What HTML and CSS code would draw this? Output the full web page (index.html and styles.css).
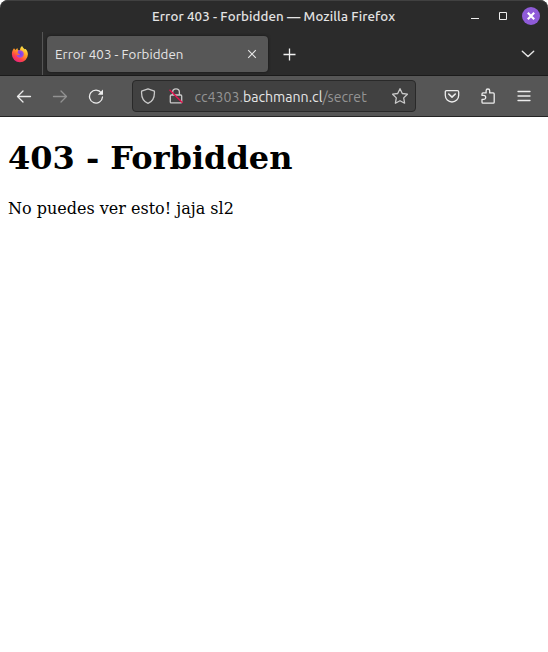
FILE: index.html
```html
<!DOCTYPE html>
<html lang="es">
<head>
<meta charset="utf-8">
<title>Error 403 - Forbidden</title>
<link rel="stylesheet" href="styles.css">
</head>
<body>
<div class="window">
  <header class="chrome">
    <div class="titlebar">
      <span class="window-title">Error 403 - Forbidden — Mozilla Firefox</span>
      <div class="window-controls">
        <svg width="10" height="10"><path d="M1 7.5h8" stroke="#eee"/></svg>
        <svg width="10" height="10"><path d="M1.5 1.5h7v7h-7z" fill="none" stroke="#eee"/></svg>
        <svg width="18" height="18"><circle cx="9" cy="9" r="9" fill="#8f5bd8"/><path d="M5.8 5.8l6.4 6.4m0-6.4l-6.4 6.4" stroke="#fff" stroke-width="2.2"/></svg>
      </div>
    </div>
    <div class="tabs">
      <div class="pinned">
        <svg width="18" height="18" viewBox="0 0 18 18">
          <defs>
            <linearGradient id="flame" x1=".85" y1=".1" x2=".3" y2="1"><stop offset="0" stop-color="#fff14a"/><stop offset=".4" stop-color="#ff9a24"/><stop offset=".72" stop-color="#ff4348"/><stop offset="1" stop-color="#e62082"/></linearGradient>
            <radialGradient id="globe"><stop offset="0" stop-color="#6d45ee"/><stop offset="1" stop-color="#a649df"/></radialGradient>
          </defs>
          <path d="M3 3.2L4.5 5 6.3 3l.7 2.2 2 .2C9 3.3 9.7 2 11.2 1c.4 1.6 1.4 2.3 2.5 3.2l1-.2c1.5 1.7 2.2 3.4 2.2 5.3a8 8 0 0 1-16 0C.9 6.7 1.6 4.7 3 3.2z" fill="url(#flame)"/>
          <path d="M7 5.5c3-.8 5.8.8 5.8 3.6 0 2.4-1.8 3.6-3.8 3.6-2.1 0-3.5-1.3-3.5-2.6l2 .1 1.7-1-2.7-1z" fill="url(#globe)"/>
        </svg>
      </div>
      <div class="tab">
        <span class="tab-title">Error 403 - Forbidden</span>
        <svg width="10" height="10"><path d="M1.2 1.2l7.6 7.6m0-7.6L1.2 8.8" stroke="#e6e6e6" stroke-width="1.1"/></svg>
      </div>
      <svg class="new-tab" width="14" height="14"><path d="M7.5 1.5v12M1.5 7.5h12" stroke="#f1f1f1" stroke-width="1.3"/></svg>
      <svg class="all-tabs" width="14" height="8"><path d="M1.3 1.2L7 6.6l5.7-5.4" fill="none" stroke="#e6e6e6" stroke-width="1.4" stroke-linecap="round" stroke-linejoin="round"/></svg>
    </div>
    <div class="toolbar">
      <div class="navigation">
        <svg width="16" height="16"><path d="M14.5 8.5h-13M7 3L1.5 8.5 7 14" class="line"/></svg>
        <svg class="disabled" width="16" height="16"><path d="M1.5 8.5h13M9 3l5.5 5.5L9 14" class="line"/></svg>
        <svg width="16" height="16"><path d="M13.3 4.8A6.5 6.5 0 1 0 14.5 9" class="line"/><path d="M15 1.5v5.2H9.8z" fill="#ececec"/></svg>
      </div>
      <div class="urlbar">
        <svg width="16" height="16"><path d="M8 .8L14.4 3.2C14.8 9 12.4 13.6 8 15.4 3.6 13.6 1.2 9 1.6 3.2z" class="line soft"/></svg>
        <svg width="16" height="16"><path d="M4.6 7V4.2a3.4 3.4 0 0 1 6.8 0V7M3.3 7h9.4q1 0 1 1v5.9q0 1-1 1H3.3q-1 0-1-1V8q0-1 1-1z" class="line soft"/><path d="M1.5 1.8l13 13" stroke="#e2124d" stroke-width="1.5"/></svg>
        <span class="url">cc4303.<b>bachmann.cl</b>/secret</span>
        <svg width="18" height="18"><path d="M9 1.7l2.3 4.8 5.1.7-3.7 3.7.9 5.3L9 13.7l-4.6 2.5.9-5.3L1.6 7.2l5.1-.7z" class="line soft"/></svg>
      </div>
      <div class="actions">
        <svg width="16" height="16"><path d="M2.6 2.6h10.8q1.3 0 1.3 1.3v3.4a6.7 6.7 0 0 1-13.4 0V3.9q0-1.3 1.3-1.3z" class="line"/><path d="M4.7 6L8 9.1 11.3 6" class="line thick"/></svg>
        <svg width="16" height="16"><path d="M2 7.4V5.9q0-1 1-1h3.1V2.8a1.8 1.8 0 0 1 3.6 0v2.1h3.5q1 0 1 1v8.3q0 1-1 1H3q-1 0-1-1v-2.8h1.7a2 2 0 0 0 0-4z" class="line"/></svg>
        <svg width="16" height="16"><path d="M2 3.5h12M2 8h12M2 12.5h12" class="line"/></svg>
      </div>
    </div>
  </header>
  <main class="page">
    <h1>403 - Forbidden</h1>
    <p>No puedes ver esto! jaja sl2</p>
  </main>
</div>
</body>
</html>
```
FILE: styles.css
```css
* { box-sizing: border-box; }
body { margin: 0; background: #fff; }
svg { display: block; flex: none; }
.window { height: 652px; overflow: hidden; }
.chrome {
  height: 117px;
  border-radius: 8px 8px 0 0;
  background: #2b2b2b;
  box-shadow: inset 0 1px #414141;
  font-family: Ubuntu, "Noto Sans", sans-serif;
  color: #e6e6e6;
}
.titlebar {
  height: 32px;
  display: flex;
  align-items: center;
  justify-content: space-between;
  padding: 0 8px 0 152px;
}
.window-title {
  padding-top: 2px;
  font-size: 13.33px;
  line-height: 18px;
  font-weight: 500;
  letter-spacing: 0.1px;
  white-space: nowrap;
  color: #e4e4e4;
}
.window-controls { display: flex; align-items: center; }
.window-controls svg:nth-child(2) { margin: 0 14px 0 18px; }
.tabs {
  height: 44px;
  display: flex;
  align-items: center;
  border-bottom: 1px solid #1b1b1b;
}
.pinned {
  width: 43px;
  height: 43px;
  padding: 13px 0 0 11px;
  border-right: 1px solid #555;
}
.tab {
  width: 221px;
  height: 36px;
  margin: 1px 0 0 4px;
  padding: 0 11px 0 8px;
  display: flex;
  align-items: center;
  justify-content: space-between;
  border-radius: 4px;
  background: #575757;
  box-shadow: 0 0 3px #151515;
}
.tab-title { font-size: 13.33px; letter-spacing: 0.05px; white-space: nowrap; }
.new-tab { margin-left: 14px; }
.all-tabs { margin-left: auto; margin-right: 13px; }
.toolbar {
  height: 41px;
  display: flex;
  align-items: center;
  padding: 0 16px;
  background: #565656;
  border-bottom: 1px solid #242424;
}
.navigation { display: flex; gap: 20px; }
.urlbar {
  width: 284px;
  height: 32px;
  margin-left: 28px;
  padding: 0 6px 0 7px;
  display: flex;
  align-items: center;
  border: 1px solid #292929;
  border-radius: 4px;
  background: #414141;
}
.urlbar svg:nth-child(2) { margin-left: 12px; }
.url {
  flex: 1;
  margin: 1px 0 0 10.5px;
  font-size: 14.13px;
  white-space: nowrap;
  color: #949494;
}
.url b { font-weight: 400; color: #e6e6e6; }
.actions { display: flex; gap: 20px; margin-left: auto; }
.line { fill: none; stroke: #ececec; stroke-width: 1.3; stroke-linecap: round; stroke-linejoin: round; }
.soft { stroke: #c9c9c9; }
.thick { stroke-width: 1.6; }
.disabled { opacity: 0.4; }
.page { display: flow-root; padding: 0 8px; color: #000; font-family: "DejaVu Serif", serif; font-size: 16px; }
.page h1 { margin: 22px 0; font-size: 32px; font-weight: 700; }
.page p { margin: 0; }
```
